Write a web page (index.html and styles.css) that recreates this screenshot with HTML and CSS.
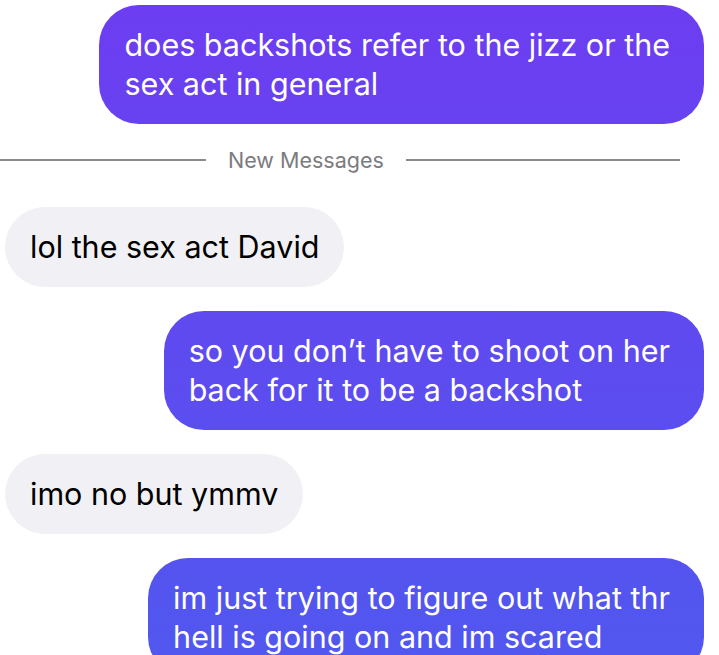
FILE: index.html
```html
<!DOCTYPE html>
<html>
<head>
<meta charset="utf-8">
<link rel="stylesheet" href="styles.css">
</head>
<body>
<div class="thread">
  <div class="bubble sent">does backshots refer to the jizz or the<br>sex act in general</div>
  <div class="divider"><span class="line"></span><span class="label">New Messages</span><span class="line right"></span></div>
  <div class="bubble recv">lol the sex act David</div>
  <div class="bubble sent">so you don’t have to shoot on her<br>back for it to be a backshot</div>
  <div class="bubble recv">imo no but ymmv</div>
  <div class="bubble sent">im just trying to figure out what thr<br>hell is going on and im scared</div>
</div>
</body>
</html>
```
FILE: styles.css
```css
html, body {
  margin: 0;
  padding: 0;
  background: #ffffff;
  overflow: hidden;
}
.thread {
  display: flex;
  flex-direction: column;
  padding-top: 5px;
  gap: 24px;
  font-family: Inter, "Noto Sans", sans-serif;
}
.bubble {
  font-size: 30.5px;
  line-height: 39px;
  padding: 20px 25px 21px 25px;
  border-radius: 40px;
  white-space: nowrap;
}
.sent {
  align-self: flex-end;
  margin-right: 15px;
  padding-right: 34px;
  color: #ffffff;
  background: linear-gradient(180deg, #6d3df1 0px, #5157ef 655px);
  background-attachment: fixed;
}
.recv {
  align-self: flex-start;
  margin-left: 5px;
  color: #000000;
  background: #f1f1f5;
}
.divider {
  display: flex;
  align-items: center;
  height: 24px;
  margin: 0 39px 11px 0;
}
.line {
  width: 206px;
  height: 2px;
  background: #8a8a8e;
}
.line.right {
  flex: 1;
  width: auto;
}
.label {
  margin: 0 22px;
  font-size: 21.5px;
  color: #7b7b80;
}
```
